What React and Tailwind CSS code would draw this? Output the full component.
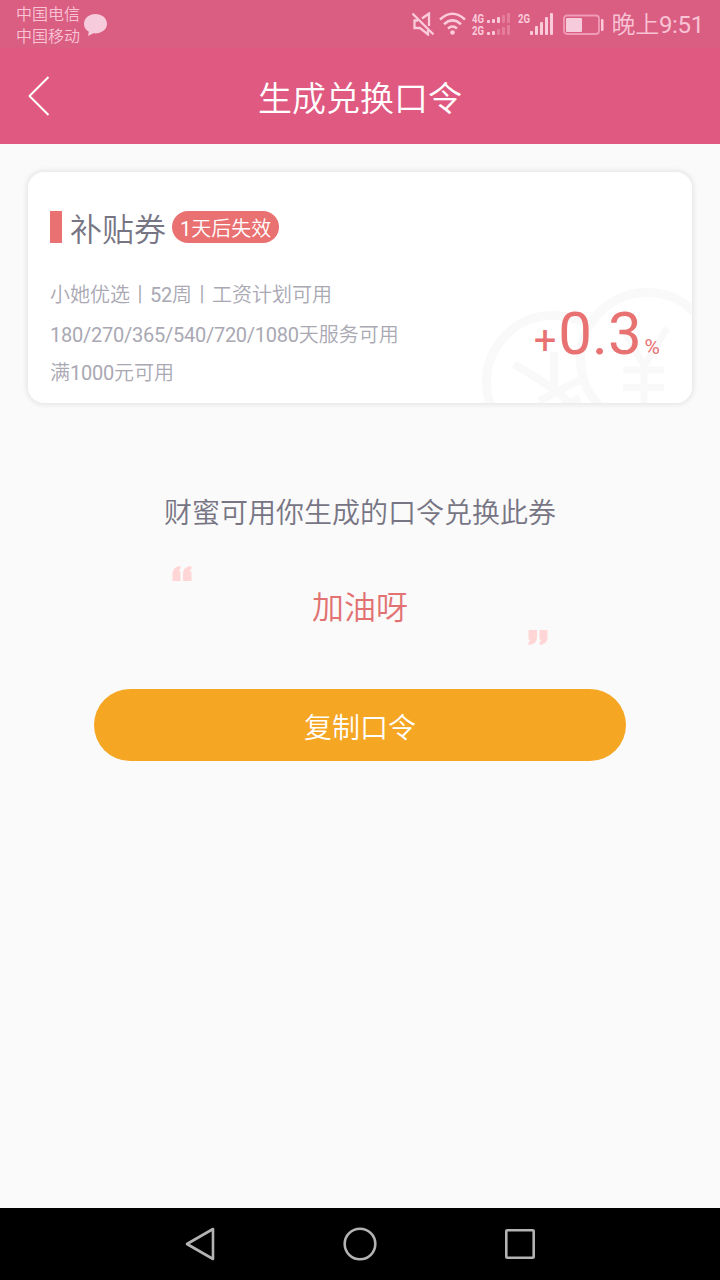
const MAIN_FONT = "font-['Roboto','Noto_Sans_CJK_SC',sans-serif]"

const TERMS = [
  { text: '小她优选丨52周丨工资计划可用', className: 'leading-10' },
  { text: '180/270/365/540/720/1080天服务可用', className: 'leading-10' },
  { text: '满1000元可用', className: 'leading-9' },
]

// digits sit a little tighter than the Chinese text around them
function TermText({ text }) {
  return text.split(/([\d/]+)/).map((part, i) => (
    <span key={i} className={i % 2 ? 'tracking-[-0.25px]' : 'font-[350]'}>{part}</span>
  ))
}

function Bars({ heights, dimFrom }) {
  return heights.map((h, i) => (
    <rect
      key={i}
      x={i * 5}
      y={-h}
      width="3"
      height={h}
      rx="1"
      opacity={i >= dimFrom ? 0.3 : 1}
    />
  ))
}

function StatusIcons() {
  return (
    <div className="flex items-start text-[#fbcbdc]">
      <svg className="mt-3 h-6 w-6" viewBox="0 0 24 24" fill="none" stroke="currentColor" strokeWidth="2.300">
        <path d="M0.500 1.500 21.500 22.500" />
        <path d="M10 6.500 17 1.500V14M6 8.500H2.500V16H8l8 6.500V18" />
      </svg>
      <svg className="ml-[3px] mt-3 h-6 w-[27px]" viewBox="0 0 27 24" fill="none" stroke="currentColor" strokeWidth="2.6">
        <path d="M1 7.500Q13.500-4 26 7.500" />
        <path d="M5 12.200Q13.500 4.500 22 12.200" />
        <path d="M9 16.500Q13.500 12.500 18 16.500" />
        <circle cx="13.500" cy="20.500" r="2.300" fill="currentColor" stroke="none" />
      </svg>
      <svg className="ml-[6px] mt-3 h-6 w-[39px] overflow-visible" viewBox="0 0 39 24" fill="currentColor">
        <text x="0" y="10.500" fontSize="12.500" fontWeight="700" textLength="12" lengthAdjust="spacingAndGlyphs">4G</text>
        <text x="0" y="23" fontSize="12.500" fontWeight="700" textLength="12" lengthAdjust="spacingAndGlyphs">2G</text>
        <g transform="translate(15 11)"><Bars heights={[3, 4, 6, 8, 10]} dimFrom={3} /></g>
        <g transform="translate(15 23)"><Bars heights={[3, 4, 6, 8, 10]} dimFrom={2} /></g>
      </svg>
      <svg className="ml-[7px] mt-3 h-6 w-[36px] overflow-visible" viewBox="0 0 36 24" fill="currentColor">
        <text x="0" y="10.500" fontSize="12.500" fontWeight="700" textLength="12" lengthAdjust="spacingAndGlyphs">2G</text>
        <g transform="translate(12 23)"><Bars heights={[4, 9, 13, 18, 22]} dimFrom={5} /></g>
      </svg>
      <svg className="ml-[9px] mt-[14px] h-[22px] w-[41px]" viewBox="0 0 41 22">
        <rect x="1" y="1.500" width="35" height="18.500" rx="3" fill="none" stroke="#f09bb8" strokeWidth="1.800" />
        <rect x="3" y="4" width="16" height="14" rx="1" fill="#f6cbdb" />
        <rect x="38" y="5" width="2.500" height="12" rx="1" fill="#fbcbdc" />
      </svg>
      <span className="ml-[8px] text-2xl leading-[50px] tracking-[-0.3px] text-[#f8c3d5]">
        <span className="font-[350]">晚上</span>9:51
      </span>
    </div>
  )
}

function StatusBar() {
  return (
    <div className="flex h-12 justify-between bg-[#da5d82] px-4">
      <div className="flex">
        <div className="pt-1 text-base font-[350] leading-[22px] text-[#f8c3d5]">
          <p>中国电信</p>
          <p>中国移动</p>
        </div>
        <svg className="ml-[3px] mt-[14px] h-[22px] w-6" viewBox="0 0 24 22" fill="#f6cbdb">
          <path d="M12.500 0C6 0 1 4.300 1 10c0 3.500 1.800 6 4.800 7.800L5 22l5.500-2.700C17.500 20 24 16 24 10 24 4.300 19 0 12.500 0z" />
        </svg>
      </div>
      <StatusIcons />
    </div>
  )
}

function Coins() {
  return (
    <svg className="absolute bottom-0 right-0 h-[120px] w-[212px]" viewBox="480 283 212 120" fill="none" stroke="#f9f9f9" strokeWidth="9">
      <circle cx="553" cy="382" r="66.500" />
      <path d="M514 364l42 26M554 352v38M539 401l41-21M556 390l14 14M552 412l28-14" strokeWidth="8" />
      <circle cx="647" cy="359" r="66.500" fill="#fff" />
      <path d="M624 330l20 36 23-38M644 362v45M623 370h41M623 387.500h41" strokeWidth="7" />
    </svg>
  )
}

function CouponCard() {
  return (
    <section className="relative h-[231px] overflow-hidden rounded-2xl bg-white px-[22px] pt-9 shadow-[0_0_5px_2px_rgba(0,0,0,0.08)]">
      <Coins />
      <div className="relative flex items-start">
        <span className="mt-[3px] h-8 w-3 bg-[#ea7171]" />
        <h2 className="ml-2 pt-[2px] text-[32px] font-[350] leading-10 text-[#777584]">补贴券</h2>
        <span className="ml-[6px] mt-[3px] h-8 rounded-full bg-[#ea7171] px-2 text-xl leading-[36px] text-white">
          1<span className="font-[350]">天后失效</span>
        </span>
      </div>
      <div className="relative mt-[25px] text-xl text-[#a9a8b3]">
        {TERMS.map((t) => (
          <p key={t.text} className={t.className}><TermText text={t.text} /></p>
        ))}
      </div>
      <div className="absolute bottom-[21px] right-[32px] flex items-baseline leading-[70px] text-[#e87272]">
        <span className="mr-[2px] text-[40px]">+</span>
        <span className="text-[60px]">0.3</span>
        <span className="ml-[3px] text-[21px]">%</span>
      </div>
    </section>
  )
}

function QuoteMark({ className }) {
  return (
    <svg className={className} viewBox="0 0 20 16" fill="#ffd6d5">
      <path d="M0.500 15V8C0.500 3 3.500 0.500 8.500 0V3C7 3.500 6.500 4.500 7.500 5.500H8.500V15z" />
      <path d="M11 15V8C11 3 14 0.500 19.500 0V3C18 3.500 17.500 4.500 18.500 5.500H19.500V15z" />
    </svg>
  )
}

export default function App() {
  return (
    <div className={`flex h-[1280px] w-[720px] flex-col bg-[#fafafa] ${MAIN_FONT}`}>
      <StatusBar />
      <header className="grid h-24 grid-cols-[1fr_auto_1fr] items-center bg-[#df5981] text-white">
        <svg className="ml-7 h-10 w-[22px]" viewBox="0 0 22 40" fill="none" stroke="currentColor" strokeWidth="2">
          <path d="M20.500 1 1.500 20l19 19" strokeLinejoin="round" />
        </svg>
        <h1 className="pt-[6px] text-[34px] font-[350] leading-[48px]">生成兑换口令</h1>
      </header>

      <main className="flex-1 px-7 pt-7">
        <CouponCard />
        <p className="mt-[91px] text-center text-[28px] font-[350] leading-10 text-[#777584]">
          财蜜可用你生成的口令兑换此券
        </p>
        <div className="mx-auto mt-[32px] flex w-[376px] flex-col">
          <QuoteMark className="h-4 w-5" />
          <p className="pt-[5px] text-center text-[32px] font-[350] leading-[42px] text-[#e27272]">加油呀</p>
          <QuoteMark className="h-4 w-5 rotate-180 self-end" />
        </div>
        <button className="mx-auto mt-11 block h-[72px] w-[532px] rounded-full bg-[#f5a623] pt-[7px] text-[28px] font-[350] leading-[65px] text-white">
          复制口令
        </button>
      </main>

      <nav className="h-[72px] bg-black">
        <div className="mx-auto flex h-full w-[352px] items-center justify-between">
          <svg className="h-9 w-8" viewBox="0 0 32 36" fill="none" stroke="#b3b3b3" strokeWidth="2.600" strokeLinejoin="round">
            <path d="M29 3v30L3 18z" />
          </svg>
          <svg className="h-9 w-9" viewBox="0 0 36 36" fill="none" stroke="#b3b3b3" strokeWidth="2.600">
            <circle cx="18" cy="18" r="15.300" />
          </svg>
          <svg className="h-9 w-8" viewBox="0 0 32 36" fill="none" stroke="#b3b3b3" strokeWidth="2.600">
            <rect x="2.300" y="4.300" width="27.400" height="27.400" rx="1" />
          </svg>
        </div>
      </nav>
    </div>
  )
}
